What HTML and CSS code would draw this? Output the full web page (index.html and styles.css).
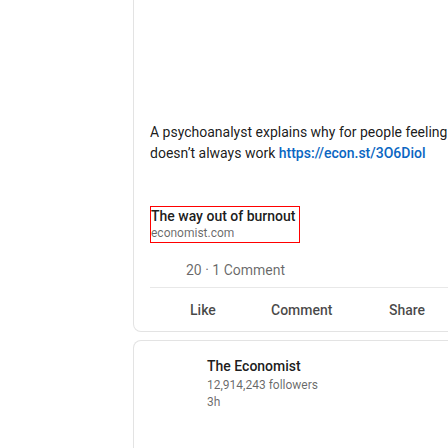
FILE: index.html
```html
<!DOCTYPE html>
<html>
<head>
<meta charset="utf-8">
<link rel="stylesheet" href="styles.css">
</head>
<body>
<div class="feed">
  <article class="card card-top">
    <div class="media-space"></div>
    <p class="commentary">A psychoanalyst explains why for people feeling burnt out, taking a holiday<br>doesn’t always work <a class="link" href="#">https://econ.st/3O6Diol</a></p>
    <div class="article-box">
      <div class="article-title">The way out of burnout</div>
      <div class="article-domain">economist.com</div>
    </div>
    <div class="social-counts">20 · 1 Comment</div>
    <div class="actions">
      <span class="action action-like">Like</span>
      <span class="action action-comment">Comment</span>
      <span class="action">Share</span>
    </div>
  </article>
  <article class="card card-next">
    <div class="actor">
      <div class="actor-name">The Economist</div>
      <div class="actor-meta actor-followers">12,914,243 followers</div>
      <div class="actor-meta">3h</div>
    </div>
  </article>
</div>
</body>
</html>
```
FILE: styles.css
```css
html, body {
  margin: 0;
  padding: 0;
  background: #ffffff;
}
body {
  font-family: Roboto, "Liberation Sans", sans-serif;
  color: rgba(0, 0, 0, 0.9);
  width: 448px;
  height: 448px;
  overflow: hidden;
}
.feed {
  padding-left: 133px;
  width: 560px;
  height: 448px;
  display: flex;
  flex-direction: column;
}
.card {
  border: 1px solid #e3e3e3;
  background: #fff;
}
.card-top {
  border-top: none;
  border-radius: 0 0 8px 8px;
  padding: 0 16px;
}
.media-space {
  height: 122px;
}
.commentary {
  margin: 0;
  font-size: 14px;
  line-height: 21px;
  white-space: nowrap;
  color: rgba(0, 0, 0, 0.9);
}
.link {
  color: #0a66c2;
  font-weight: 500;
  text-decoration: none;
}
.article-box {
  margin-top: 42px;
  width: 148px;
  height: 35px;
  border: 1px solid #ff0000;
  overflow: hidden;
  white-space: nowrap;
}
.article-title {
  font-size: 14px;
  font-weight: 500;
  line-height: 18px;
  color: rgba(0, 0, 0, 0.9);
}
.article-domain {
  font-size: 12px;
  line-height: 16px;
  color: rgba(0, 0, 0, 0.6);
}
.social-counts {
  margin-top: 17px;
  padding-left: 36px;
  font-size: 14px;
  line-height: 20px;
  color: rgba(0, 0, 0, 0.6);
}
.actions {
  margin-top: 7px;
  border-top: 1px solid #e8e8e8;
  display: flex;
  align-items: center;
  padding-left: 40px;
  height: 43px;
}
.action {
  font-size: 14px;
  font-weight: 500;
  line-height: 20px;
  color: rgba(0, 0, 0, 0.72);
}
.action-like {
  width: 81px;
}
.action-comment {
  width: 118px;
}
.card-next {
  margin-top: 8px;
  flex: 1;
  border-bottom: none;
  border-radius: 8px 8px 0 0;
  padding: 15px 16px 0 73px;
}
.actor-name {
  font-size: 14px;
  font-weight: 500;
  line-height: 20px;
  color: rgba(0, 0, 0, 0.9);
}
.actor-meta {
  font-size: 12px;
  line-height: 16px;
  color: rgba(0, 0, 0, 0.6);
}
.actor-followers {
  line-height: 17px;
  padding-top: 1px;
}
```
